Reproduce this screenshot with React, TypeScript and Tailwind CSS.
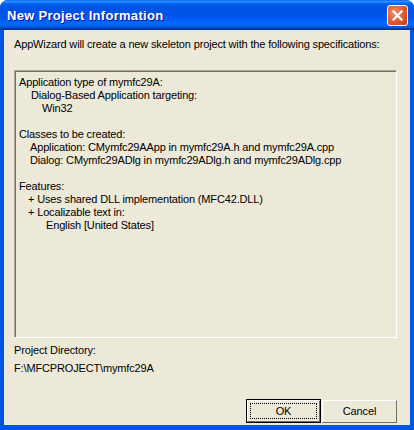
import React, { FC } from "react";

const lines: { text: string; indent: string }[] = [
  { text: "Application type of mymfc29A:", indent: "pl-0" },
  { text: "Dialog-Based Application targeting:", indent: "pl-[12px]" },
  { text: "Win32", indent: "pl-[23px]" },
  { text: "", indent: "pl-0" },
  { text: "Classes to be created:", indent: "pl-0" },
  { text: "Application: CMymfc29AApp in mymfc29A.h and mymfc29A.cpp", indent: "pl-[11px]" },
  { text: "Dialog: CMymfc29ADlg in mymfc29ADlg.h and mymfc29ADlg.cpp", indent: "pl-[11px]" },
  { text: "", indent: "pl-0" },
  { text: "Features:", indent: "pl-0" },
  { text: "+ Uses shared DLL implementation (MFC42.DLL)", indent: "pl-[9px]" },
  { text: "+ Localizable text in:", indent: "pl-[9px]" },
  { text: "English [United States]", indent: "pl-[27px]" },
];

const CloseButton: FC = () => (
  <div className="w-[21px] h-[21px] rounded-[3px] border border-white bg-[radial-gradient(circle_at_35%_35%,#F0906C_0%,#E0582F_55%,#C23C14_100%)] flex items-center justify-center">
    <svg width="11" height="11" viewBox="0 0 11 11">
      <path d="M1.5 1.5 L9.5 9.5 M9.5 1.5 L1.5 9.5" stroke="white" strokeWidth="2.2" strokeLinecap="square" />
    </svg>
  </div>
);

const App: FC = () => {
  return (
    <div className="w-[414px] h-[430px] bg-[#0055E5] rounded-t-[8px] flex flex-col font-['Liberation_Sans',Arial,sans-serif] text-[11px] tracking-[-0.15px] text-black leading-[13px] overflow-hidden">
      <div className="h-[30px] shrink-0 flex items-center justify-between pl-[7px] pr-[6px] bg-[linear-gradient(to_bottom,#0058EE_0%,#3593FF_4%,#288EFF_6%,#127DFF_8%,#036FFC_10%,#0262EE_14%,#0057E5_20%,#0054E3_24%,#0055EB_56%,#005BF5_66%,#026AFE_76%,#0062EF_86%,#0052D6_92%,#0040AB_94%,#003092_100%)]">
        <span className="text-white font-bold text-[13px] tracking-[0.3px] [text-shadow:1px_1px_#0F1089] mt-[1px]">
          New Project Information
        </span>
        <CloseButton />
      </div>
      <div className="flex-1 mx-[4px] mb-[5px] bg-[#ECE9D8] flex flex-col px-[10px]">
        <p className="mt-[8px] h-[13px]">
          AppWizard will create a new skeleton project with the following specifications:
        </p>
        <div className="mt-[19px] h-[268px] w-[383px] border-t border-l border-t-[#ACA899] border-l-[#ACA899] border-b border-r border-b-white border-r-white">
          <div className="h-full border-t border-l border-t-[#716F64] border-l-[#716F64] pt-[4px] pl-[3px]">
            {lines.map((l, i) => (
              <div key={i} className={`h-[13px] whitespace-nowrap ${l.indent}`}>
                {l.text}
              </div>
            ))}
          </div>
        </div>
        <p className="mt-[6px] h-[13px]">Project Directory:</p>
        <p className="mt-[5px] h-[13px]">F:\MFCPROJECT\mymfc29A</p>
        <div className="mt-auto mb-[2px] flex justify-end gap-[1px] pr-[3px]">
          <button className="w-[75px] h-[24px] border border-black bg-[#ECE9D8] p-0">
            <div className="h-full border-t border-l border-t-white border-l-white border-b border-r border-b-[#716F64] border-r-[#716F64] p-[2px]">
              <div className="h-full border border-dotted border-black flex items-center justify-center">
                OK
              </div>
            </div>
          </button>
          <button className="w-[75px] h-[23px] mt-[1px] bg-[#ECE9D8] border-t border-l border-t-white border-l-white border-b border-r border-b-[#716F64] border-r-[#716F64] flex items-center justify-center">
            Cancel
          </button>
        </div>
      </div>
    </div>
  );
};

export default App;
